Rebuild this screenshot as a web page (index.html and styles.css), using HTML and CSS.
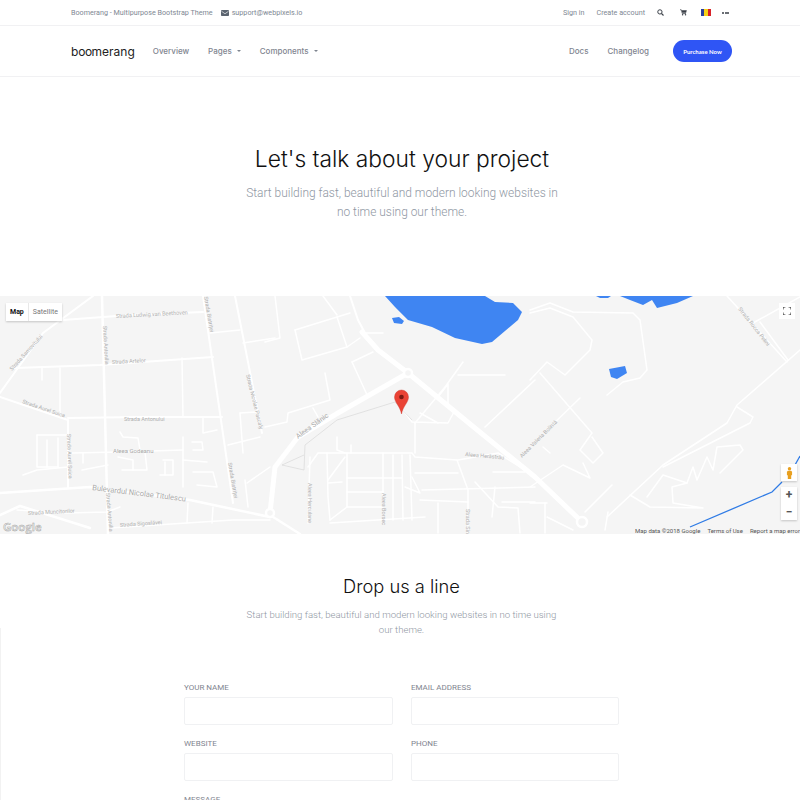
FILE: index.html
```html
<!DOCTYPE html>
<html lang="en">
<head>
    <meta charset="UTF-8">
    <meta name="viewport" content="width=device-width, initial-scale=1.0">
    <title>Boomerang - Contact</title>
    <link rel="stylesheet" href="styles.css">
</head>
<body>

    <!-- Top bar -->
    <div class="topbar">
        <div class="container">
            <span class="topbar-title">Boomerang - Multipurpose Bootstrap Theme</span>
            <svg class="icon-mail" viewBox="0 0 16 12"><rect width="16" height="12" rx="1.5" fill="#5b6470"/><path d="M1 2.500 8 7.500 15 2.500" fill="none" stroke="#fff" stroke-width="1.300"/></svg>
            <span class="topbar-mail">support@webpixels.io</span>
            <div class="topbar-right">
                <a>Sign in</a>
                <a>Create account</a>
                <svg class="icon-search" viewBox="0 0 14 14"><circle cx="5.800" cy="5.800" r="4.300" fill="none" stroke="#3a3f47" stroke-width="2"/><path d="M9 9 13 13" stroke="#3a3f47" stroke-width="2.200"/></svg>
                <svg class="icon-cart" viewBox="0 0 14 13"><path d="M0 1H2.500L4.500 8.500H12" fill="none" stroke="#3a3f47" stroke-width="1.400"/><path d="M3.400 2.200H13.600L12.200 7H4.600Z" fill="#3a3f47"/><circle cx="5.200" cy="11" r="1.500" fill="#3a3f47"/><circle cx="11" cy="11" r="1.500" fill="#3a3f47"/></svg>
                <span class="flag"><i class="flag-blue"></i><i class="flag-yellow"></i><i class="flag-red"></i></span>
                <span class="dots"><i></i><i></i><i></i></span>
            </div>
        </div>
    </div>

    <!-- Navbar -->
    <nav class="navbar">
        <div class="container">
            <span class="logo">b<span class="logo-oo">oo</span>merang</span>
            <a class="nav-link">Overview</a>
            <a class="nav-link caret">Pages</a>
            <a class="nav-link caret">Components</a>
            <div class="nav-right">
                <a class="nav-link">Docs</a>
                <a class="nav-link">Changelog</a>
                <a class="btn-purchase">Purchase Now</a>
            </div>
        </div>
    </nav>

    <!-- Hero -->
    <section class="hero">
        <h1>Let's talk about your project</h1>
        <p>Start building fast, beautiful and modern looking websites in<br>no time using our theme.</p>
    </section>

    <!-- Map -->
    <div class="map">
        <svg class="map-canvas" viewBox="0 296 800 238">
            <g class="water">
                <path d="M385 296 395 307 408 320 432 327 455 338 482 344 492 342 518 320 522 312 513 303 495 302 485 296Z"/>
                <path d="M392 318 399 317 404 321 402 324 394 323Z"/>
                <path d="M620 296 630 300 643 305 652 300 657 308 677 303 693 296Z"/>
                <path d="M596 296 600 298 608 298 611 296Z"/>
                <path d="M609 369 625 366 627 373 617 379 611 377Z"/>
            </g>

            <g class="road road-thin">
                <!-- west side -->
                <polyline points="60,368 60,417"/>
                <polyline points="42,368 42,380"/>
                <polyline points="182,358 183,417"/>
                <polyline points="210,333 240,330"/>
                <polyline points="243,343 275,338"/>
                <polyline points="37,435 67,435"/>
                <polyline points="37,435 37,467 58,467"/>
                <polyline points="47,440 47,467"/>
                <polyline points="58,438 58,467"/>
                <polyline points="72,453 120,452 183,450"/>
                <polyline points="120,432 123,437 138,438 140,450"/>
                <polyline points="145,452 147,470 122,470"/>
                <polyline points="118,457 133,460 133,470"/>
                <polyline points="82,470 108,465"/>
                <polyline points="83,463 83,453"/>
                <polyline points="163,460 173,460 173,475 160,475"/>
                <polyline points="165,462 165,475"/>
                <polyline points="183,437 183,487"/>
                <polyline points="183,460 207,462"/>
                <polyline points="203,418 203,433 217,430"/>
                <polyline points="192,442 202,442 203,450 193,450Z"/>
                <polyline points="193,472 213,472 217,487 197,485"/>
                <polyline points="228,445 260,437"/>
                <polyline points="240,413 257,412"/>
                <polyline points="240,413 243,453"/>
                <polyline points="247,483 270,467"/>
                <polyline points="245,480 248,507"/>
                <polyline points="23,475 37,470 68,467"/>
                <polyline points="17,510 67,513 107,512 120,507"/>
                <polyline points="188,503 187,523"/>
                <polyline points="213,507 212,523"/>
                <polyline points="110,528 233,520 270,520"/>
                <!-- middle -->
                <polyline points="275,296 280,338 265,342"/>
                <polyline points="323,296 337,315"/>
                <polyline points="295,330 350,313"/>
                <polyline points="295,330 302,360 347,347 360,338"/>
                <polyline points="337,317 347,347"/>
                <polyline points="365,333 383,333"/>
                <polyline points="352,362 373,352"/>
                <polyline points="352,362 368,397"/>
                <polyline points="325,373 330,400 288,413 287,422 265,427"/>
                <polyline points="313,408 318,417"/>
                <polyline points="308,467 318,453 412,453 415,457 457,460"/>
                <polyline points="415,423 415,453"/>
                <polyline points="403,410 412,422 448,423 455,410"/>
                <polyline points="415,423 445,387 463,362"/>
                <polyline points="420,413 438,423"/>
                <polyline points="438,397 448,384 448,403"/>
                <polyline points="458,375 505,375"/>
                <polyline points="485,427 535,380"/>
                <polyline points="457,460 468,490 468,533"/>
                <polyline points="458,460 498,453 525,470"/>
                <polyline points="493,472 525,472"/>
                <polyline points="415,473 458,473"/>
                <polyline points="422,490 535,487"/>
                <polyline points="495,487 492,517"/>
                <polyline points="502,502 535,502"/>
                <polyline points="475,482 498,507 518,508 520,533"/>
                <polyline points="420,500 468,502"/>
                <polyline points="438,503 438,533"/>
                <polyline points="327,453 328,497 330,520"/>
                <polyline points="347,453 347,507"/>
                <polyline points="383,453 383,503"/>
                <polyline points="393,455 393,520"/>
                <polyline points="402,455 403,520"/>
                <polyline points="410,455 412,520"/>
                <polyline points="347,478 402,478"/>
                <polyline points="347,492 383,492"/>
                <polyline points="347,507 383,507"/>
                <polyline points="330,520 347,507"/>
                <polyline points="328,483 342,482"/>
                <polyline points="345,457 328,480"/>
                <polyline points="337,437 337,450 345,453"/>
                <polyline points="351,445 351,453"/>
                <polyline points="330,523 425,517"/>
                <polyline points="310,457 308,523"/>
                <polyline points="412,477 420,493 405,487"/>
                <!-- east side -->
                <polyline points="530,310 550,303 573,312 633,313 640,320 647,370 640,378 623,382 607,395"/>
                <polyline points="530,313 550,308 573,317 592,340 590,350 565,375 547,362 530,380"/>
                <polyline points="540,373 592,433 580,450 593,463 603,453 592,437"/>
                <polyline points="580,398 547,430"/>
                <polyline points="543,447 550,453"/>
                <polyline points="530,487 563,465 590,478 583,463"/>
                <polyline points="612,485 585,512"/>
                <polyline points="800,350 737,405 727,423 663,465 607,517"/>
                <polyline points="737,407 753,417 750,423 663,467"/>
                <polyline points="727,296 787,362"/>
                <polyline points="760,322 788,360"/>
                <polyline points="800,297 753,323"/>
                <polyline points="630,495 650,507 703,508 673,503 672,487 687,483 663,475 647,497"/>
                <polyline points="687,483 693,467 697,480 707,457 713,470 717,447 740,445 743,450 720,473"/>
                <polyline points="547,503 530,503"/>
                <polyline points="545,503 545,533"/>
                <polyline points="547,517 573,530"/>
                <polyline points="608,512 605,530"/>
            </g>

            <g class="road road-mid">
                <polyline points="93,296 43,333 0,393"/>
                <polyline points="63,320 130,315 203,312"/>
                <polyline points="15,368 100,365 213,357"/>
                <polyline points="203,296 233,503"/>
                <polyline points="235,296 262,433"/>
                <polyline points="68,418 140,417 222,417"/>
                <polyline points="0,397 68,420 68,487"/>
                <polyline points="350,296 358,320 365,333"/>
            </g>

            <polyline class="road road-wide" points="102,296 108,534"/>
            <polyline class="road road-wide" points="0,493 90,487 190,500 270,517"/>
            <polyline class="road road-wide" points="0,515 20,506 90,528"/>
            <polyline class="road road-wide" points="270,515 300,534"/>
            <polyline class="road road-main" points="362,332 378,350 408,373 470,424 535,477 582,522"/>
            <polyline class="road road-main" points="408,373 338,413 298,437 275,467 270,513"/>
            <circle class="roundabout" cx="408" cy="373" r="4"/>
            <circle class="roundabout" cx="270" cy="513" r="4"/>
            <circle class="roundabout" cx="582" cy="522" r="5"/>

            <polyline class="path-grey" points="282,465 304,470 305,445 337,420 395,402 412,420"/>
            <polyline class="path-grey" points="282,465 304,455"/>
            <polyline class="route" points="690,527 772,492 782,482"/>
            <polyline class="route" points="795,465 800,456"/>

            <g class="map-label">
                <text x="116" y="318" transform="rotate(-3 116 318)">Strada Ludwig van Beethoven</text>
                <text x="12" y="371" transform="rotate(-48 12 371)">Strada Samovitului</text>
                <text x="103" y="326" transform="rotate(87 103 326)">Strada Antonilia</text>
                <text x="112" y="364" transform="rotate(-3 112 364)">Strada Artelor</text>
                <text x="22" y="403" transform="rotate(19 22 403)">Strada Aurel Suica</text>
                <text x="124" y="421">Strada Antonului</text>
                <text x="113" y="453" class="map-label-dark">Aleea Godeanu</text>
                <text x="67" y="434" transform="rotate(88 67 434)">Strada Aurel Suica</text>
                <text x="246" y="375" transform="rotate(76 246 375)">Strada Nicolae Pascaly</text>
                <text x="228" y="463" transform="rotate(80 228 463)">Strada Bistriței</text>
                <text x="204" y="297" transform="rotate(80 204 297)">Strada Bistriței</text>
                <text x="28" y="515" transform="rotate(-3 28 515)">Strada Muncitorilor</text>
                <text x="120" y="527" transform="rotate(-4 120 527)">Strada Sigoslăvei</text>
                <text x="106" y="493" transform="rotate(85 106 493)">Strada Antonilia</text>
                <text x="92" y="490" transform="rotate(7 92 490)" class="map-label-big">Bulevardul Nicolae Titulescu</text>
                <text x="298" y="439" transform="rotate(-36 298 439)" class="map-label-mid">Aleea Slănic</text>
                <text x="465" y="456" transform="rotate(5 465 456)">Aleea Herăstrău</text>
                <text x="522" y="458" transform="rotate(-45 522 458)">Aleea Valeria Bolintâ</text>
                <text x="308" y="483" transform="rotate(90 308 483)">Aleea Herculane</text>
                <text x="382" y="493" transform="rotate(90 382 493)">Aleea Borsec</text>
                <text x="466" y="509" transform="rotate(90 466 509)">Strada Sinaia</text>
                <text x="738" y="309" transform="rotate(52 738 309)">Strada Rocca Pelini</text>
            </g>

            <!-- marker -->
            <path class="pin" d="M401.500 414 C400 406 394.500 402.500 394.500 397 A7 7 0 0 1 408.500 397 C408.500 402.500 403 406 401.500 414Z"/>
            <circle class="pin-dot" cx="401.500" cy="397" r="2.300"/>
        </svg>

        <div class="map-type">
            <span class="map-type-on">Map</span>
            <span>Satellite</span>
        </div>
        <div class="map-full">
            <svg viewBox="0 0 10 10"><path d="M0 3V0H3M7 0H10V3M10 7V10H7M3 10H0V7" fill="none" stroke="#333" stroke-width="1.300"/></svg>
        </div>
        <div class="map-pegman">
            <svg viewBox="0 0 8 14"><circle cx="4" cy="2" r="2" fill="#e8a020"/><path d="M1 5.500 2.200 4.300H5.800L7 5.500V9.500H6V14H2V9.500H1Z" fill="#e8a020"/></svg>
        </div>
        <div class="map-zoom">
            <span>+</span>
            <span>&minus;</span>
        </div>
        <span class="map-google">Google</span>
        <div class="map-attr">
            <span>Map data ©2018 Google</span>
            <span>Terms of Use</span>
            <span>Report a map error</span>
        </div>
    </div>

    <!-- Contact form -->
    <section class="contact">
        <h2>Drop us a line</h2>
        <p>Start building fast, beautiful and modern looking websites in no time using<br>our theme.</p>
        <form class="contact-form">
            <div class="field">
                <label>Your name</label>
                <input type="text">
            </div>
            <div class="field">
                <label>Email address</label>
                <input type="text">
            </div>
            <div class="field">
                <label>Website</label>
                <input type="text">
            </div>
            <div class="field">
                <label>Phone</label>
                <input type="text">
            </div>
            <div class="field field-full">
                <label>Message</label>
            </div>
        </form>
    </section>

</body>
</html>
```

FILE: styles.css
```css
html, body {
    height: 800px;
    overflow: hidden;
}
body {
    margin: 0;
    background-color: #fff;
    font-family: Roboto, sans-serif;
    color: #333;
}
.container {
    display: flex;
    align-items: center;
    height: 100%;
    margin: 0 68px 0 71px;
}

/* top bar */
.topbar {
    height: 25px;
    border-bottom: 1px solid #f1f1f3;
    font-size: 7.200px;
    color: #808893;
}
.icon-mail {
    width: 8px;
    height: 6px;
    margin: 0 3px 0 8px;
}
.topbar-right {
    display: flex;
    align-items: center;
    margin-left: auto;
}
.topbar-right a {
    margin-right: 12px;
}
.icon-search {
    width: 7px;
    height: 7px;
}
.icon-cart {
    width: 7px;
    height: 7px;
    margin-left: 16px;
}
.flag {
    display: flex;
    width: 10px;
    height: 7px;
    margin-left: 14px;
}
.flag i {
    flex: 1;
}
.flag-blue { background-color: #2b3f9e; }
.flag-yellow { background-color: #f7d117; }
.flag-red { background-color: #d8232a; }
.dots {
    display: flex;
    gap: 0.500px;
    margin: 0 3px 0 11px;
}
.dots i {
    width: 2px;
    height: 2px;
    border-radius: 50%;
    background-color: #3a3f47;
}

/* navbar */
.navbar {
    height: 50px;
    border-bottom: 1px solid #f1f1f3;
}
.logo {
    margin-right: 18px;
    font-family: Inter, sans-serif;
    font-size: 12px;
    color: #222;
}
.logo-oo {
    letter-spacing: -0.600px;
}
.nav-link {
    margin-right: 19px;
    font-family: Inter, sans-serif;
    font-size: 8px;
    font-weight: 500;
    color: #7f8590;
}
.caret::after {
    content: "";
    display: inline-block;
    margin-left: 5px;
    vertical-align: 2px;
    border-top: 2.500px solid #7f8590;
    border-left: 2.500px solid transparent;
    border-right: 2.500px solid transparent;
}
.nav-right {
    display: flex;
    align-items: center;
    margin-left: auto;
}
.btn-purchase {
    display: flex;
    align-items: center;
    justify-content: center;
    width: 59px;
    height: 22px;
    margin-left: 5px;
    border-radius: 11px;
    background-color: #2f55f5;
    color: #fff;
    font-family: Lato, sans-serif;
    font-size: 6px;
    font-weight: 700;
}

/* hero */
.hero {
    height: 219px;
    box-sizing: border-box;
    padding: 68px 0 0 4px;
    text-align: center;
}
.hero h1 {
    margin: 0 0 11px;
    font-family: Inter, sans-serif;
    font-size: 22.800px;
    line-height: 28px;
    font-weight: 300;
    color: #111;
}
.hero p {
    margin: 0;
    font-size: 11.950px;
    line-height: 19px;
    font-weight: 300;
    color: #8f97a3;
}

/* map */
.map {
    position: relative;
    height: 238px;
    overflow: hidden;
    background-color: #f5f5f5;
}
.map-canvas {
    display: block;
    width: 800px;
    height: 238px;
}
.water path {
    fill: #3f85f2;
}
.road {
    fill: none;
    stroke: #fff;
    stroke-linejoin: round;
    stroke-linecap: round;
}
.road-thin { stroke-width: 1.500px; }
.road-mid { stroke-width: 2px; }
.road-wide { stroke-width: 2.500px; }
.road-main { stroke-width: 5px; }
.roundabout {
    fill: #f5f5f5;
    stroke: #fff;
    stroke-width: 2.500px;
}
.path-grey {
    fill: none;
    stroke: #d8d8d8;
    stroke-width: 0.700px;
}
.route {
    fill: none;
    stroke: #2f7be5;
    stroke-width: 1.300px;
}
.map-label text {
    font-family: Roboto, sans-serif;
    font-size: 5.500px;
    fill: #b0b0b0;
}
.map-label .map-label-dark {
    font-size: 6px;
    fill: #a8a8a8;
}
.map-label .map-label-mid {
    font-size: 7px;
    fill: #aaa;
}
.map-label .map-label-big {
    font-size: 7.500px;
    fill: #a8a8a8;
}
.pin {
    fill: #ea4335;
    stroke: #c9352a;
    stroke-width: 0.400px;
}
.pin-dot {
    fill: #7c1a12;
}
.map-type {
    position: absolute;
    top: 7px;
    left: 6px;
    display: flex;
    height: 18px;
    background-color: #fff;
    box-shadow: 0 1px 2px rgba(0, 0, 0, 0.2);
    font-size: 7px;
    line-height: 18px;
    color: #777;
}
.map-type span {
    padding: 0 4px;
}
.map-type-on {
    border-right: 1px solid #e8e8e8;
    font-weight: 700;
    color: #111;
}
.map-full {
    position: absolute;
    top: 7px;
    right: 5px;
    display: flex;
    align-items: center;
    justify-content: center;
    width: 16px;
    height: 16px;
    background-color: #fff;
}
.map-full svg {
    width: 8px;
    height: 8px;
}
.map-pegman {
    position: absolute;
    top: 168px;
    right: 3px;
    display: flex;
    align-items: center;
    justify-content: center;
    width: 16px;
    height: 17px;
    background-color: #fff;
    box-shadow: 0 1px 2px rgba(0, 0, 0, 0.2);
}
.map-pegman svg {
    width: 7px;
    height: 12px;
}
.map-zoom {
    position: absolute;
    top: 191px;
    right: 3px;
    width: 16px;
    background-color: #fff;
    box-shadow: 0 1px 2px rgba(0, 0, 0, 0.2);
    font-size: 12px;
    font-weight: 700;
    line-height: 16.500px;
    text-align: center;
    color: #555;
}
.map-zoom span {
    display: block;
}
.map-google {
    position: absolute;
    left: 3px;
    bottom: 0;
    font-family: "Open Sans", sans-serif;
    font-size: 11.500px;
    font-weight: 600;
    line-height: 14px;
    color: #f5f5f5;
    -webkit-text-stroke: 0.500px #a5a5a5;
}
.map-attr {
    position: absolute;
    right: 0;
    bottom: 0;
    display: flex;
    gap: 7px;
    font-size: 6px;
    line-height: 6px;
    white-space: nowrap;
    color: #555;
}

/* contact */
.contact {
    position: relative;
    padding: 40px 0 0 3px;
    text-align: center;
}
.contact::before {
    content: "";
    position: absolute;
    top: 94px;
    bottom: 0;
    left: 0;
    width: 1px;
    background-color: #f2f2f2;
}
.contact h2 {
    margin: 0 0 9px;
    font-family: Inter, sans-serif;
    font-size: 18.300px;
    line-height: 24px;
    font-weight: 300;
    color: #111;
}
.contact p {
    margin: 0;
    font-size: 9.600px;
    line-height: 15px;
    font-weight: 300;
    color: #8f97a3;
}
.contact-form {
    display: grid;
    grid-template-columns: 209px 208px;
    column-gap: 18px;
    row-gap: 14px;
    width: 435px;
    margin: 46px 0 0 181px;
    text-align: left;
}
.field label {
    display: block;
    margin-bottom: 4px;
    font-size: 8px;
    line-height: 10px;
    text-transform: uppercase;
    color: #7f8590;
}
.field input {
    display: block;
    width: 100%;
    height: 28px;
    box-sizing: border-box;
    border: 1px solid #f0f1f3;
    border-radius: 2px;
    background-color: #fff;
}
.field-full {
    grid-column: 1 / 3;
}
```
